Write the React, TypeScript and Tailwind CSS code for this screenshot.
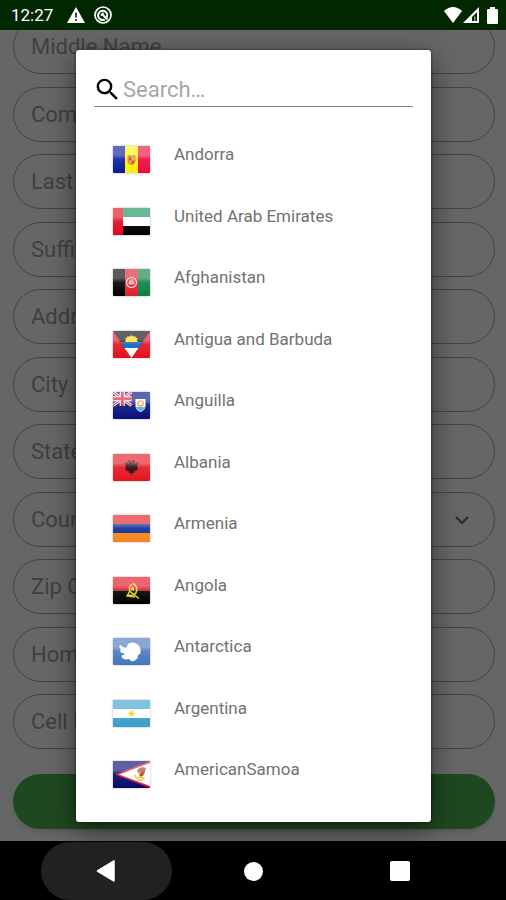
import type { ReactNode } from "react";
import { MdSearch } from "react-icons/md";

const fieldsBefore = ["Middle Name", "Company", "Last Name", "Suffix", "Address", "City", "State"];
const fieldsAfter = ["Zip Code", "Home Phone", "Cell Phone"];

const pill =
  "block h-[55px] w-full shrink-0 appearance-none rounded-full border border-[#a8a8a8] bg-transparent px-[17px] text-[22px] text-[#a0a0a0] placeholder:text-[#a0a0a0] outline-none";

const flags: { name: string; art: ReactNode }[] = [
  {
    name: "Andorra",
    art: (
      <>
        <rect width="12" height="27" fill="#0a1a9c" />
        <rect x="12" width="13" height="27" fill="#fff200" />
        <rect x="25" width="12" height="27" fill="#ee0a3c" />
        <path d="M14.500 9h3l1 1 1-1h3v6q0 3-4 4-4-1-4-4z" fill="#d9822b" />
        <path d="M16 11h2v3h-2zM19 15h2v2h-2z" fill="#b5502a" />
        <path d="M19 11h2v3h-2zM16 15h2v2h-2z" fill="#f0b040" />
      </>
    ),
  },
  {
    name: "United Arab Emirates",
    art: (
      <>
        <rect width="37" height="9" fill="#119056" />
        <rect y="9" width="37" height="9" fill="#fff" />
        <rect y="18" width="37" height="9" fill="#000" />
        <rect width="10" height="27" fill="#e3061a" />
      </>
    ),
  },
  {
    name: "Afghanistan",
    art: (
      <>
        <rect width="12" height="27" fill="#000" />
        <rect x="12" width="13" height="27" fill="#dd2030" />
        <rect x="25" width="12" height="27" fill="#0a8040" />
        <circle cx="18.500" cy="13.500" r="5" fill="none" stroke="#fbd5d5" strokeWidth="1.200" />
        <path d="M16 15h5v-2l-2.500-3-2.500 3z" fill="#f3a0a0" stroke="#fbd5d5" strokeWidth=".8" />
      </>
    ),
  },
  {
    name: "Antigua and Barbuda",
    art: (
      <>
        <rect width="37" height="27" fill="#e3101e" />
        <path d="M0 0h37L18.500 27z" fill="#0a0a0a" />
        <path d="M7.500 11h22l-4 6h-14z" fill="#0a63b8" />
        <path d="M11.500 17h14l-7 10z" fill="#fff" />
        <path d="M12 11l1-2-1-2 2-.3.6-1.800 1.800.8 2-1.700 2 1.700 1.800-.8.6 1.800 2 .3-1 2 1 2z" fill="#ffd21a" />
      </>
    ),
  },
  {
    name: "Anguilla",
    art: (
      <>
        <rect width="37" height="27" fill="#06107c" />
        <path d="M0 0l18.500 13.500M18.500 0L0 13.500" stroke="#fff" strokeWidth="3" />
        <path d="M0 0l18.500 13.500M18.500 0L0 13.500" stroke="#dc1436" strokeWidth="1.200" />
        <path d="M9.250 0v14M0 6.750h18.500" stroke="#fff" strokeWidth="5" />
        <path d="M9.250 0v14M0 6.750h18.500" stroke="#dc1436" strokeWidth="2.800" />
        <path d="M22.500 7h10v7q0 4-5 6-5-2-5-6z" fill="#fff" />
        <path d="M22.800 15h9.400q-.8 3-4.700 4.600-3.900-1.600-4.700-4.600z" fill="#4fb3e0" />
        <circle cx="27.500" cy="11.500" r="2.600" fill="none" stroke="#f2902a" strokeWidth="1.400" />
      </>
    ),
  },
  {
    name: "Albania",
    art: (
      <>
        <rect width="37" height="27" fill="#e3161e" />
        <path
          d="M18.500 8.500l-1.500-2.500-2.500 1 1.500 1.500-.5 1.500-2-2-2 .8 1 1.200v7l1.500-1 .5 1.500 1.500-1-.5 2.500 1.800-.5 1.200 2.500 1.200-2.500 1.800.5-.5-2.500 1.500 1 .5-1.500 1.500 1v-7l1-1.200-2-.8-2 2-.5-1.500 1.500-1.500-2.500-1z"
          fill="#2a0306"
        />
      </>
    ),
  },
  {
    name: "Armenia",
    art: (
      <>
        <rect width="37" height="9" fill="#e01a24" />
        <rect y="9" width="37" height="9" fill="#0b2a95" />
        <rect y="18" width="37" height="9" fill="#f5851f" />
      </>
    ),
  },
  {
    name: "Angola",
    art: (
      <>
        <rect width="37" height="13.500" fill="#e0101e" />
        <rect y="13.500" width="37" height="13.500" fill="#000" />
        <path d="M20 6.500q5 3 3.500 8-2 5-8.500 3.500" fill="none" stroke="#e8d21a" strokeWidth="1.600" />
        <path d="M19 7q-3.500 3-2.500 7l9.500 7.500M16.500 14.500l-2.500 4.500 8 1" fill="none" stroke="#e8d21a" strokeWidth="1.400" />
        <path d="M19.500 9l.8 1.700 1.800.2-1.300 1.200.4 1.800-1.700-.9-1.600.9.300-1.800-1.300-1.200 1.800-.2z" fill="#e8d21a" />
      </>
    ),
  },
  {
    name: "Antarctica",
    art: (
      <>
        <rect width="37" height="27" fill="#4677bd" />
        <path
          d="M6 8l2-1 1.500 2 3 .8 1.500-.8.5-2.500 3-2 4 .2 3 1.500 2 2 1 3v4l-2.500 2-.5 3-4 3-3-.3-1-2-4 .5-3.500-1.500-.5-2.500 3-1-.5-1-3.500-1v-3.500z"
          fill="#fff"
        />
      </>
    ),
  },
  {
    name: "Argentina",
    art: (
      <>
        <rect width="37" height="9" fill="#3a9fd0" />
        <rect y="9" width="37" height="9" fill="#fff" />
        <rect y="18" width="37" height="9" fill="#3a9fca" />
        <path d="M18.500 10.300l.8 1.300 1.500-.5-.4 1.500 1.400.9-1.400.9.400 1.500-1.500-.5-.8 1.300-.8-1.300-1.500.5.400-1.500-1.400-.9 1.400-.9-.4-1.500 1.500.5z" fill="#f7d51d" />
      </>
    ),
  },
  {
    name: "AmericanSamoa",
    art: (
      <>
        <rect width="37" height="27" fill="#06086a" />
        <path d="M37 0v27L2 13.500z" fill="#e01832" />
        <path d="M37 2v23L6 13.500z" fill="#fff" />
        <path d="M25 8l4-2 4 1-1 4-2 4-3 1-1-3-2-3z" fill="#a8421f" />
        <path d="M25 10l3 1-1 3z" fill="#e8a078" />
        <path d="M21 14l3 3 3-1 4 1-2 2h-5" fill="none" stroke="#e8c030" strokeWidth="1.300" />
      </>
    ),
  },
];

function Flag({ children }: { children: ReactNode }) {
  return (
    <svg
      viewBox="0 0 37 27"
      className="h-[27px] w-[37px] shrink-0 rounded-[1px] shadow-[0_0_2px_rgba(0,0,0,0.4)]"
      aria-hidden="true"
    >
      <defs>
        <linearGradient id="gloss" x1="0" y1="0" x2="0" y2="1">
          <stop offset="0" stopColor="#fff" stopOpacity=".36" />
          <stop offset=".33" stopColor="#fff" stopOpacity=".36" />
          <stop offset=".5" stopColor="#fff" stopOpacity=".1" />
          <stop offset="1" stopColor="#fff" stopOpacity="0" />
        </linearGradient>
      </defs>
      {children}
      <rect width="37" height="27" fill="url(#gloss)" />
    </svg>
  );
}

function StatusBar() {
  return (
    <header className="flex h-[30px] shrink-0 items-center bg-[#002700] pr-2 pl-[11px] text-white">
      <span className="text-[17px] leading-5">12:27</span>
      <svg viewBox="0 0 18 16" className="ml-[14px] h-4 w-[18px]" aria-hidden="true">
        <path d="M9 0l9 16H0z" fill="#fff" />
        <path d="M9 5.500v5M9 12v2" stroke="#002700" strokeWidth="1.600" />
      </svg>
      <svg viewBox="0 0 18 18" className="ml-[9px] size-[18px]" aria-hidden="true">
        <circle cx="9" cy="9" r="8" fill="none" stroke="#fff" strokeWidth="1.700" />
        <path d="M12.800 11.500a4.600 4.600 0 1 0-2 2" fill="none" stroke="#fff" strokeWidth="2" />
        <path d="M8 8l5.500 5.500M7 9.500l2.500-2.500" fill="none" stroke="#fff" strokeWidth="2" />
      </svg>
      <svg viewBox="0 0 18 16" className="ml-auto h-4 w-[18px]" aria-hidden="true">
        <path d="M0 4q9-8 18 0L9 16z" fill="#fff" />
      </svg>
      <svg viewBox="0 0 16 16" className="ml-px size-4" aria-hidden="true">
        <path d="M16 0v16H0zM14 5l-5 5v4h5z" fill="#fff" fillRule="evenodd" />
        <path d="M11 9.500h1.500V14H11z" fill="#fff" opacity=".5" />
      </svg>
      <svg viewBox="0 0 11 17" className="ml-2 h-[17px] w-[11px]" aria-hidden="true">
        <path d="M3 0h5v2h2q1 0 1 1v13q0 1-1 1H1q-1 0-1-1V3q0-1 1-1h2z" fill="#fff" />
      </svg>
    </header>
  );
}

function ProfileForm() {
  return (
    <form className="flex min-h-0 flex-1 flex-col pr-[11px] pb-3 pl-[13px]">
      <div className="-mt-[11px] flex flex-1 flex-col justify-between">
        {fieldsBefore.map((label) => (
          <input key={label} aria-label={label} placeholder={label} className={pill} />
        ))}
        <div className="relative">
          <select aria-label="Country" className={pill}>
            <option>Country</option>
          </select>
          <svg
            viewBox="0 0 14 8"
            className="pointer-events-none absolute top-6 right-[26px] h-2 w-[14px]"
            aria-hidden="true"
          >
            <path d="M1 1l6 6 6-6" fill="none" stroke="#666" strokeWidth="2" />
          </svg>
        </div>
        {fieldsAfter.map((label) => (
          <input key={label} aria-label={label} placeholder={label} className={pill} />
        ))}
      </div>
      <button
        type="button"
        aria-label="Submit"
        className="mt-[25px] h-[55px] shrink-0 rounded-full bg-[#4cb550] shadow-md"
      />
    </form>
  );
}

function CountryDialog() {
  return (
    <div className="absolute inset-0 flex bg-black/60 pt-5 pr-[75px] pb-[19px] pl-[76px]">
      <section
        role="dialog"
        aria-label="Select country"
        className="flex flex-1 flex-col rounded-[3px] bg-white px-[18px] pt-[23px] pb-[34px] shadow-[0_8px_28px_rgba(0,0,0,0.5),0_0_3px_rgba(0,0,0,0.6)]"
      >
        <label className="flex h-[34px] shrink-0 items-center border-b border-[#858585]">
          <MdSearch className="-ml-px size-[29px] shrink-0 text-black" />
          <input
            type="search"
            aria-label="Search"
            placeholder="Search…"
            className="ml-px min-w-0 flex-1 bg-transparent text-[22px] leading-7 outline-none placeholder:text-[#a6a6a6]"
          />
        </label>
        <ul className="mt-[39px] flex flex-1 flex-col justify-between pl-[19px]">
          {flags.map(({ name, art }) => (
            <li key={name}>
              <button type="button" className="flex h-[27px] w-full items-start gap-6 text-left">
                <Flag>{art}</Flag>
                <span className="text-[17px] leading-4 text-[#727272]">{name}</span>
              </button>
            </li>
          ))}
        </ul>
      </section>
    </div>
  );
}

function NavBar() {
  const key = "flex h-full w-[131px] items-center justify-center rounded-full";
  return (
    <nav className="flex h-[59px] shrink-0 justify-center gap-4 bg-black pt-px">
      <button type="button" aria-label="Back" className={`${key} bg-[#212121]`}>
        <svg viewBox="0 0 20 22" className="h-[22px] w-5">
          <path d="M18 1v20L1.500 11z" fill="#fff" stroke="#fff" strokeWidth="1.500" strokeLinejoin="round" />
        </svg>
      </button>
      <button type="button" aria-label="Home" className={key}>
        <span className="size-[19px] rounded-full bg-white" />
      </button>
      <button type="button" aria-label="Recent apps" className={key}>
        <span className="size-5 rounded-[2px] bg-white" />
      </button>
    </nav>
  );
}

export default function App() {
  return (
    <div className="flex h-screen min-h-[900px] flex-col bg-black font-[Roboto,'Liberation_Sans',sans-serif]">
      <StatusBar />
      <main className="relative flex min-h-0 flex-1 flex-col overflow-hidden bg-white">
        <ProfileForm />
        <CountryDialog />
      </main>
      <NavBar />
    </div>
  );
}
